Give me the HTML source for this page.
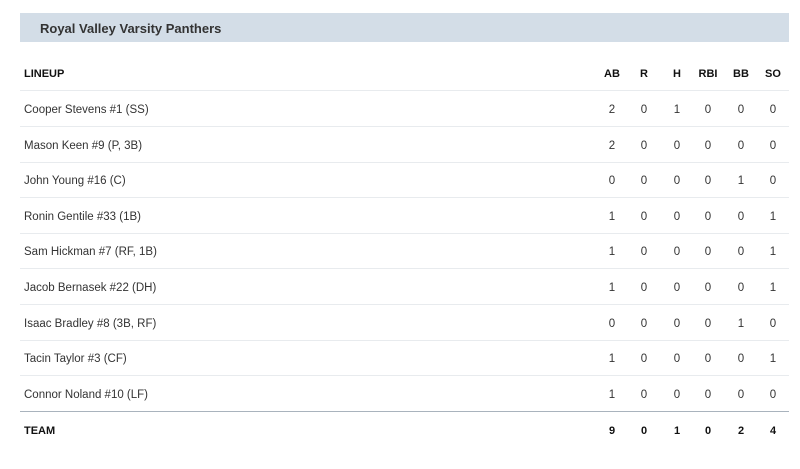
<!DOCTYPE html><html><head><style>
body{margin:0;background:#fff;font-family:"Liberation Sans",sans-serif;width:800px;height:469px;overflow:hidden}
.hd{position:absolute;left:20px;top:13px;width:769px;height:29px;background:#d3dde7}
.hd span{position:absolute;left:20px;top:8px;font-size:13px;font-weight:bold;color:#333}
.r{position:absolute;left:20px;width:769px;height:35px;border-bottom:1px solid #e8ebee;font-size:11.5px;color:#333}
.r span{position:absolute;top:13px}
.c{width:30px;text-align:center;margin-left:-15px}
.b{font-weight:bold;font-size:11px;color:#111}
</style></head><body>
<div class="hd"><span>Royal Valley Varsity Panthers</span></div>
<div id="t"></div>
<script>
const rows=[["LINEUP","AB","R","H","RBI","BB","SO"],
["Cooper Stevens #1 (SS)",2,0,1,0,0,0],["Mason Keen #9 (P, 3B)",2,0,0,0,0,0],["John Young #16 (C)",0,0,0,0,1,0],["Ronin Gentile #33 (1B)",1,0,0,0,0,1],["Sam Hickman #7 (RF, 1B)",1,0,0,0,0,1],["Jacob Bernasek #22 (DH)",1,0,0,0,0,1],["Isaac Bradley #8 (3B, RF)",0,0,0,0,1,0],["Tacin Taylor #3 (CF)",1,0,0,0,0,1],["Connor Noland #10 (LF)",1,0,0,0,0,0],["TEAM",9,0,1,0,2,4]];
const xs=[592,624,657,688,721,753];
let h="";
rows.forEach((r,i)=>{let top=i==0?55:i==10?412:91+(i-1)*35.6;
let st=`top:${top}px;`+(i==9?"border-bottom:1px solid #a9b3bd;":"")+(i==10?"border-bottom:none;":"");
let cls=(i==0||i==10)?" b":"";
h+=`<div class="r${cls}" style="${st}"><span style="left:4px">${r[0]}</span>`;
for(let j=1;j<7;j++)h+=`<span class="c" style="left:${xs[j-1]}px">${r[j]}</span>`;
h+="</div>";});
document.getElementById("t").innerHTML=h;
</script>
</body></html>
